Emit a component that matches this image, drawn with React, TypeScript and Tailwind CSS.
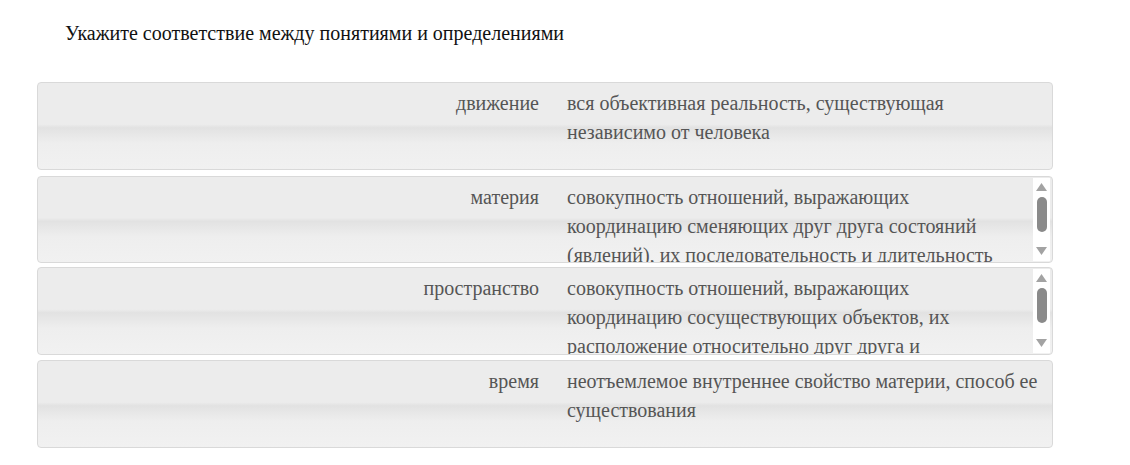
import React from 'react'

type Row = { term: string; lines: string[]; scroll?: boolean; mt: string; h: string }

const rows: Row[] = [
  {
    term: 'движение',
    lines: ['вся объективная реальность, существующая', 'независимо от человека'],
    mt: 'mt-0',
    h: 'h-[88px]',
  },
  {
    term: 'материя',
    lines: [
      'совокупность отношений, выражающих',
      'координацию сменяющих друг друга состояний',
      '(явлений), их последовательность и длительность',
    ],
    scroll: true,
    mt: 'mt-[6px]',
    h: 'h-[87px]',
  },
  {
    term: 'пространство',
    lines: [
      'совокупность отношений, выражающих',
      'координацию сосуществующих объектов, их',
      'расположение относительно друг друга и',
    ],
    scroll: true,
    mt: 'mt-[4px]',
    h: 'h-[88px]',
  },
  {
    term: 'время',
    lines: ['неотъемлемое внутреннее свойство материи, способ ее', 'существования'],
    mt: 'mt-[5px]',
    h: 'h-[88px]',
  },
]

function Scrollbar() {
  return (
    <div className="absolute right-[2px] top-[1px] bottom-[1px] w-[17px] bg-white flex flex-col items-center py-[4px]">
      <svg width="11" height="8" viewBox="0 0 11 8" className="mt-[1px]">
        <polygon points="5.5,0 11,8 0,8" fill="#a3a3a3" />
      </svg>
      <div className="mt-[6px] w-[10px] h-[35px] rounded-full bg-[#8a8a8a]" />
      <div className="flex-1" />
      <svg width="11" height="8" viewBox="0 0 11 8" className="mb-[2px]">
        <polygon points="0,0 11,0 5.5,8" fill="#a3a3a3" />
      </svg>
    </div>
  )
}

export default function App() {
  return (
    <div className="w-[1130px] h-[465px] bg-white pt-[20px] font-['Liberation_Serif',serif]">
      <h1 className="pl-[65px] text-[20px] leading-[26px] text-[#111]">
        Укажите соответствие между понятиями и определениями
      </h1>

      <div className="mt-[36px] ml-[37px] w-[1016px] flex flex-col">
        {rows.map((r) => (
          <div
            key={r.term}
            className={`relative ${r.mt} ${r.h} flex border border-[#d9d9d9] rounded-[4px] overflow-hidden bg-[linear-gradient(180deg,#ececec_0%,#ececec_48%,#e2e2e2_52%,#eeeeee_70%,#f1f1f1_100%)] text-[#555] text-[20px] leading-[29px]`}
          >
            <div className="w-[514px] shrink-0 text-right pr-[13px] pt-[6px]">{r.term}</div>
            <div className="pl-[15px] pt-[6px]">
              {r.lines.map((l) => (
                <div key={l} className="whitespace-nowrap">
                  {l}
                </div>
              ))}
            </div>
            {r.scroll && <Scrollbar />}
          </div>
        ))}
      </div>
    </div>
  )
}
